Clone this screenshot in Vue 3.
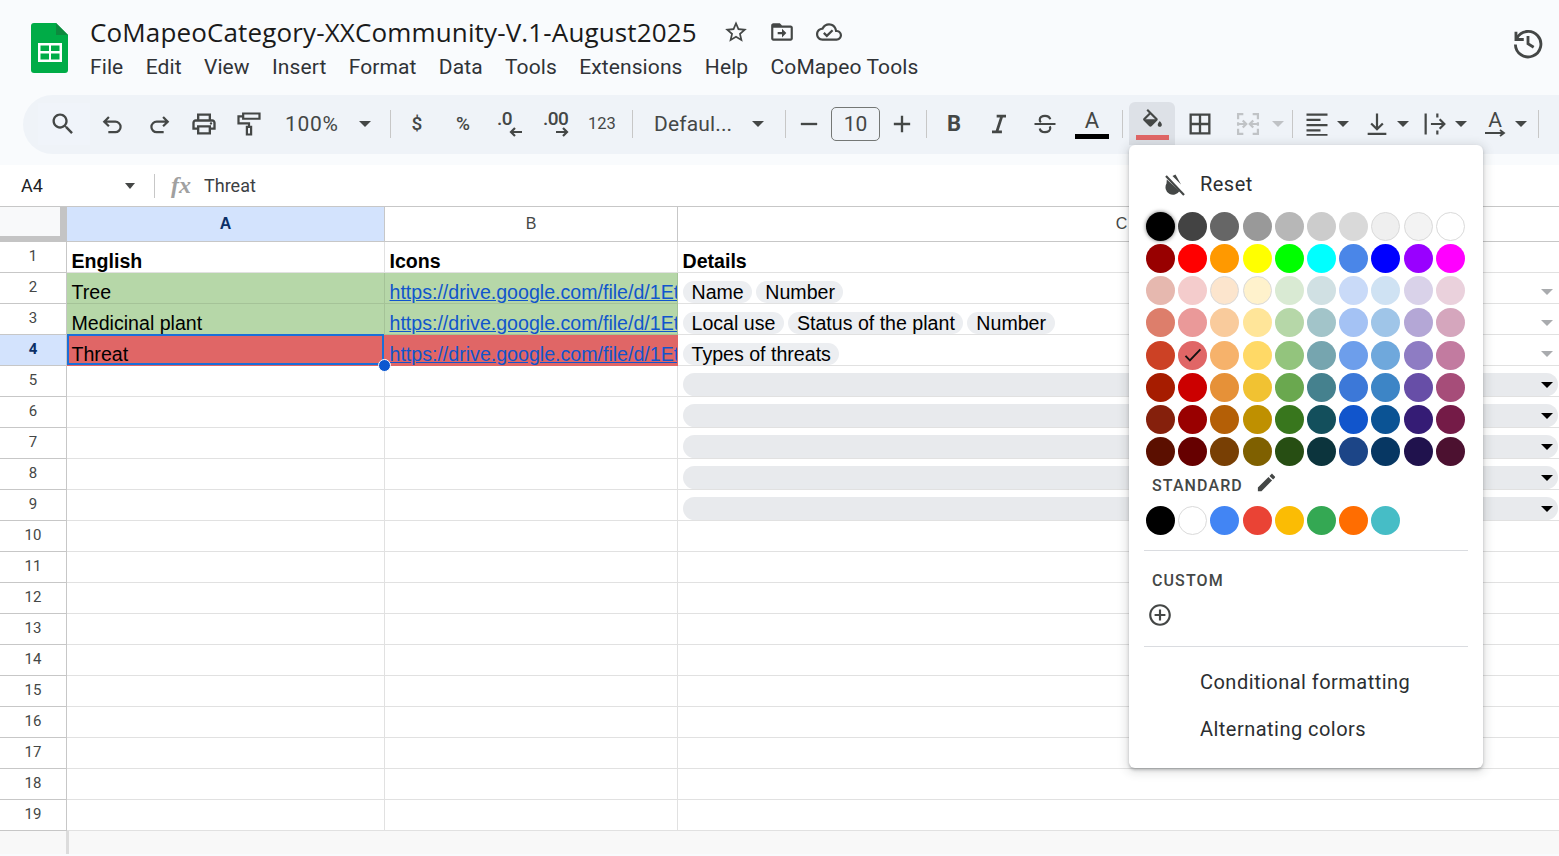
<template>
  <div class="app">
    <header class="head">
      <svg class="logo" viewBox="0 0 37 50">
        <path d="M3 0h22l12 12v35a3 3 0 0 1-3 3H3a3 3 0 0 1-3-3V3a3 3 0 0 1 3-3z" fill="#00ac47" />
        <path d="M25 0l12 12H25z" fill="#0d8a3e" />
        <path d="M7 20h24v19H7z M9.500 22.500v5.500h8.500v-5.500z M20 22.500v5.500h8.500v-5.500z M9.500 30.500v6h8.500v-6z M20 30.500v6h8.500v-6z" fill="#fff" fill-rule="evenodd" />
      </svg>
      <div class="head-main">
        <div class="title-row">
          <span class="title">CoMapeoCategory-XXCommunity-V.1-August2025</span>
          <svg class="title-ico star" viewBox="0 0 24 24"><path :d="icons.star.d" /></svg>
          <svg class="title-ico folder" viewBox="0 0 24 24"><path :d="icons.folder.d" /></svg>
          <svg class="title-ico cloud" viewBox="0 0 24 24"><path :d="icons.cloud.d" /></svg>
        </div>
        <nav class="menu">
          <span v-for="m in menu" :key="m">{{ m }}</span>
        </nav>
      </div>
      <svg class="history line-ico" viewBox="0 0 24 24">
        <path d="M4.200 8.500A9 9 0 1 1 3.100 13" />
        <path d="M3.500 4v5.500H9" />
        <path d="M12 7v5.500l4 2.500" />
      </svg>
    </header>

    <div class="toolbar">
      <template v-for="(t, i) in tools" :key="i">
        <div v-if="t.sep" class="sep" :style="{ width: t.w + 'px' }"><i></i></div>
        <div v-else class="tool" :class="t.cls" :style="{ width: t.w + 'px' }">
          <svg v-if="t.icon" class="ico" :class="{ stroked: icons[t.icon].stroked }" viewBox="0 0 24 24">
            <path :d="icons[t.icon].d" />
            <circle v-if="t.icon === 'print'" cx="18" cy="11.500" r="1" />
          </svg>
          <span v-if="t.text" class="tool-text">{{ t.text }}</span>
          <span v-if="t.dec" class="dec">
            <b>{{ t.dec }}</b>
            <svg viewBox="0 0 14 10" :class="t.flip ? 'flip' : ''"><path d="M13 5H2M6 1 2 5l4 4" /></svg>
          </span>
          <span v-if="t.bar" class="bar-a">A<i></i></span>
          <span v-if="t.fill" class="bar-fill">
            <svg class="ico" viewBox="0 0 24 24"><path :d="icons.fill.d" /><path d="M5.210 10h9.580L10 14.800z" /></svg>
            <i></i>
          </span>
          <span v-if="t.rotate" class="rot">A<svg viewBox="0 0 24 8"><path d="M2 4h19M17 1l4 3-4 3" /></svg></span>
          <span v-if="t.box" class="size-box">10</span>
          <i v-if="t.caret" class="caret" :class="{ off: t.off }"></i>
        </div>
      </template>
    </div>

    <div class="formula">
      <span class="cell-name">A4</span>
      <i class="caret small"></i>
      <i class="fsep"></i>
      <span class="fx">fx</span>
      <span class="fval">Threat</span>
    </div>

    <section class="sheet">
      <div class="row head-row">
        <div class="corner"></div>
        <div class="col-h sel">A</div>
        <div class="col-h">B</div>
        <div class="col-h">C</div>
      </div>

      <div v-for="n in 19" :key="n" class="row">
        <div class="row-h" :class="{ sel: n === 4 }">{{ n }}</div>
        <div class="cell a" :class="[rowCls(n), { active: n === 4, bold: n === 1 }]">{{ rows[n - 1]?.a }}</div>
        <div class="cell b" :class="[rowCls(n), { bold: n === 1 }]">
          <a v-if="rows[n - 1]?.link">https://drive.google.com/file/d/1EtmTy8Hk3dGq</a>
          <template v-else>{{ rows[n - 1]?.b }}</template>
        </div>
        <div class="cell c" :class="{ bold: n === 1 }">
          <template v-if="n === 1">Details</template>
          <template v-else-if="rows[n - 1]?.chips">
            <span v-for="c in rows[n - 1].chips" :key="c" class="chip">{{ c }}</span>
            <i class="caret grey"></i>
          </template>
          <div v-else-if="n >= 5 && n <= 9" class="empty-chip"><i class="caret dark"></i></div>
        </div>
      </div>
    </section>

    <footer class="foot"><i></i></footer>

    <div class="popup">
      <div class="reset">
        <svg class="reset-ico" viewBox="0 0 24 24">
          <path d="M3.500 11.500A7.500 7.500 0 0 0 16.500 19L3.800 7.500z" />
          <path d="M9.500 4l3-1.500L18 12.500z" />
          <path class="slash" d="M3 4l18 19" />
        </svg>
        <span>Reset</span>
      </div>
      <div class="swatches">
        <span
          v-for="c in palette"
          :key="c.id"
          class="swatch"
          :class="{ light: lightOnes.includes(c.hex), first: c.id === 0 }"
          :style="{ background: c.hex }"
        >
          <svg v-if="c.hex === '#e06666'" viewBox="0 0 24 24"><path d="M4 12.500l5 5L21 5" /></svg>
        </span>
      </div>
      <div class="label std">
        <span>STANDARD</span>
        <svg viewBox="0 0 24 24"><path :d="icons.pencil.d" /></svg>
      </div>
      <div class="swatches">
        <span
          v-for="c in standard"
          :key="c"
          class="swatch"
          :class="{ light: c === '#ffffff' }"
          :style="{ background: c }"
        ></span>
      </div>
      <hr class="rule one" />
      <div class="label custom">CUSTOM</div>
      <svg class="plus" viewBox="0 0 24 24"><path :d="icons.plus.d" /></svg>
      <hr class="rule two" />
      <div class="pop-item first">Conditional formatting</div>
      <div class="pop-item">Alternating colors</div>
    </div>
  </div>
</template>

<script setup>
const menu = ["File", "Edit", "View", "Insert", "Format", "Data", "Tools", "Extensions", "Help", "CoMapeo Tools"];

const icons = {
  star: { d: "M22 9.240l-7.190-.620L12 2 9.190 8.630 2 9.240l5.460 4.730L5.820 21 12 17.270 18.180 21l-1.630-7.030L22 9.240zM12 15.400l-3.760 2.270 1-4.280-3.320-2.880 4.380-.380L12 6.100l1.710 4.040 4.380.380-3.320 2.880 1 4.280L12 15.400z" },
  folder: { d: "M20 6h-8l-2-2H4c-1.100 0-2 .900-2 2v12c0 1.100.900 2 2 2h16c1.100 0 2-.900 2-2V8c0-1.100-.900-2-2-2zm0 12H4V8h16v10zm-8-4H8v-2h4V9l4 4-4 4v-3z" },
  cloud: { d: "M19.350 10.040C18.670 6.590 15.640 4 12 4 9.110 4 6.600 5.640 5.350 8.040 2.340 8.360 0 10.910 0 14c0 3.310 2.690 6 6 6h13c2.760 0 5-2.240 5-5 0-2.640-2.050-4.780-4.650-4.960zM19 18H6c-2.210 0-4-1.790-4-4 0-2.050 1.530-3.760 3.560-3.970l1.070-.110.500-.950C8.080 7.140 9.940 6 12 6c2.620 0 4.880 1.860 5.390 4.430l.300 1.500 1.530.110c1.560.100 2.780 1.410 2.780 2.960 0 1.650-1.350 3-3 3zm-9-3.820l-2.090-2.090L6.500 13.500 10 17l6.010-6.010-1.410-1.410z" },
  search: { d: "M15.500 14h-.790l-.280-.270C15.410 12.590 16 11.110 16 9.500 16 5.910 13.090 3 9.500 3S3 5.910 3 9.500 5.910 16 9.500 16c1.610 0 3.090-.590 4.230-1.570l.270.280v.790l5 4.990L20.490 19l-4.990-5zm-6 0C7.010 14 5 11.990 5 9.500S7.010 5 9.500 5 14 7.010 14 9.500 11.990 14 9.500 14z" },
  undo: { stroked: true, d: "M8.500 6 4.500 10l4 4M4.500 10H14a4.500 4.500 0 0 1 0 9H8" },
  redo: { stroked: true, d: "M15.500 6l4 4-4 4M19.500 10H10a4.500 4.500 0 0 0 0 9h6" },
  print: { d: "M19 8h-1V3H6v5H5c-1.660 0-3 1.340-3 3v6h4v4h12v-4h4v-6c0-1.660-1.340-3-3-3zM8 5h8v3H8V5zm8 12v2H8v-4h8v2zm2-2v-2H6v2H4v-4c0-.550.450-1 1-1h14c.550 0 1 .450 1 1v4h-2z" },
  paint: { stroked: true, d: "M7 3h14v4.500H7zM7 5.500H3v6h9v3M10.200 14.500h3.600V21h-3.600z" },
  minus: { d: "M5 11h14v2H5z" },
  add: { d: "M19 13h-6v6h-2v-6H5v-2h6V5h2v6h6v2z" },
  italic: { d: "M10 4v2.500h2.800l-3.600 11H6V20h8.500v-2.500h-2.800l3.600-11H18V4z" },
  strike: { stroked: true, d: "M16.500 8c-.500-2-2.300-3-4.500-3-2.700 0-4.500 1.400-4.500 3.300 0 .900.400 1.700 1 2.200M3 12h18M7.500 15.800c.400 2.200 2.300 3.200 4.500 3.200 2.700 0 4.500-1.400 4.500-3.300 0-.700-.200-1.200-.500-1.700" },
  fill: { d: "M16.560 8.940L7.620 0 6.210 1.410l2.380 2.380-5.150 5.150c-.590.590-.590 1.540 0 2.120l5.500 5.500c.290.290.680.440 1.060.440s.770-.150 1.060-.440l5.500-5.500c.590-.580.590-1.530 0-2.120zM5.210 10L10 5.210 14.790 10H5.210zM19 11.500s-2 2.170-2 3.500c0 1.100.900 2 2 2s2-.900 2-2c0-1.330-2-3.500-2-3.500z" },
  borders: { d: "M3 3v18h18V3H3zm8 16H5v-6h6v6zm0-8H5V5h6v6zm8 8h-6v-6h6v6zm0-8h-6V5h6v6z" },
  merge: { stroked: true, d: "M8 3.500H3.500V8M3.500 16v4.500H8M16 3.500h4.500V8M20.500 16v4.500H16M3.500 10.500v3M20.500 10.500v3M3.500 12H10M7.500 9l3 3-3 3M20.500 12H14M16.500 9l-3 3 3 3" },
  align: { d: "M3 3h18v2H3zM3 7.500h12v2H3zM3 12h18v2H3zM3 16.500h12v2H3zM3 20.500h18v1.500H3z" },
  valign: { stroked: true, d: "M12 3v13M7 11.500l5 5 5-5M4 20.500h16" },
  wrap: { stroked: true, d: "M4 3v18M8.500 12H20M16 8l4 4-4 4M14 3v3.500M14 17.500V21" },
  pencil: { d: "M3 17.250V21h3.750L17.810 9.940l-3.750-3.750L3 17.250zM20.710 7.040c.390-.390.390-1.020 0-1.410l-2.340-2.340c-.390-.390-1.020-.390-1.410 0l-1.830 1.830 3.750 3.750 1.830-1.830z" },
  plus: { d: "M13 7h-2v4H7v2h4v4h2v-4h4v-2h-4V7zm-1-5C6.480 2 2 6.480 2 12s4.480 10 10 10 10-4.480 10-10S17.520 2 12 2zm0 18c-4.410 0-8-3.590-8-8s3.590-8 8-8 8 3.590 8 8-3.590 8-8 8z" },
};

// widths are the distance to the next button, the toolbar is one flex row
const tools = [
  { w: 52, icon: "search", cls: "search" },
  { w: 46, icon: "undo" },
  { w: 45, icon: "redo" },
  { w: 46, icon: "print" },
  { w: 43, icon: "paint" },
  { w: 108, text: "100%", caret: true, cls: "zoom" },
  { w: 24, sep: true },
  { w: 30, text: "$", cls: "sym" },
  { w: 62, text: "%", cls: "sym" },
  { w: 30, dec: ".0" },
  { w: 62, dec: ".00", flip: true },
  { w: 32, text: "123", cls: "num" },
  { w: 28, sep: true },
  { w: 126, text: "Defaul...", caret: true, cls: "font" },
  { w: 26, sep: true },
  { w: 22, icon: "minus" },
  { w: 68, box: true, cls: "box" },
  { w: 28, icon: "add" },
  { w: 20, sep: true },
  { w: 36, text: "B", cls: "bold-b" },
  { w: 54, icon: "italic" },
  { w: 38, icon: "strike" },
  { w: 56, bar: true },
  { w: 4, sep: true },
  { w: 46, fill: true, cls: "fill" },
  { w: 50, icon: "borders" },
  { w: 46, icon: "merge", cls: "off" },
  { w: 14, caret: true, off: true },
  { w: 14, sep: true },
  { w: 60, icon: "align", caret: true, cls: "split" },
  { w: 58, icon: "valign", caret: true, cls: "split" },
  { w: 60, icon: "wrap", caret: true, cls: "split" },
  { w: 60, rotate: true, caret: true, cls: "split turn" },
  { w: 2, sep: true },
];

const rows = [
  { a: "English", b: "Icons" },
  { a: "Tree", link: true, chips: ["Name", "Number"] },
  { a: "Medicinal plant", link: true, chips: ["Local use", "Status of the plant", "Number"] },
  { a: "Threat", link: true, chips: ["Types of threats"] },
];

const rowCls = (n) => (n === 2 || n === 3 ? "green" : n === 4 ? "red" : "");

const paletteHex = [
  "#000000", "#434343", "#666666", "#999999", "#b7b7b7", "#cccccc", "#d9d9d9", "#efefef", "#f3f3f3", "#ffffff",
  "#980000", "#ff0000", "#ff9900", "#ffff00", "#00ff00", "#00ffff", "#4a86e8", "#0000ff", "#9900ff", "#ff00ff",
  "#e6b8af", "#f4cccc", "#fce5cd", "#fff2cc", "#d9ead3", "#d0e0e3", "#c9daf8", "#cfe2f3", "#d9d2e9", "#ead1dc",
  "#dd7e6b", "#ea9999", "#f9cb9c", "#ffe599", "#b6d7a8", "#a2c4c9", "#a4c2f4", "#9fc5e8", "#b4a7d6", "#d5a6bd",
  "#cc4125", "#e06666", "#f6b26b", "#ffd966", "#93c47d", "#76a5af", "#6d9eeb", "#6fa8dc", "#8e7cc3", "#c27ba0",
  "#a61c00", "#cc0000", "#e69138", "#f1c232", "#6aa84f", "#45818e", "#3c78d8", "#3d85c6", "#674ea7", "#a64d79",
  "#85200c", "#990000", "#b45f06", "#bf9000", "#38761d", "#134f5c", "#1155cc", "#0b5394", "#351c75", "#741b47",
  "#5b0f00", "#660000", "#783f04", "#7f6000", "#274e13", "#0c343d", "#1c4587", "#073763", "#20124d", "#4c1130",
];
const palette = paletteHex.map((hex, id) => ({ hex, id }));
const lightOnes = ["#efefef", "#f3f3f3", "#ffffff", "#fce5cd", "#fff2cc"];
const standard = ["#000000", "#ffffff", "#4285f4", "#ea4335", "#fbbc04", "#34a853", "#ff6d01", "#46bdc6"];
</script>

<style>
html,
body {
  margin: 0;
  background: #fff;
}
</style>

<style scoped>
.app {
  position: relative;
  width: 1559px;
  height: 856px;
  overflow: hidden;
  font-family: Roboto, "Liberation Sans", sans-serif;
  color: #202124;
  background: #f9fbfd;
}

.head {
  height: 95px;
  box-sizing: border-box;
  padding: 23px 0 0 31px;
  display: flex;
  align-items: flex-start;
}
.logo {
  width: 37px;
  height: 50px;
  flex: none;
}
.head-main {
  margin-left: 21px;
  margin-top: -9px;
}
.title-row {
  display: flex;
  align-items: center;
  height: 36px;
}
.title {
  font-family: "Open Sans", sans-serif;
  font-size: 26px;
  letter-spacing: 0.14px;
  width: 606px;
  white-space: nowrap;
  color: #1a1a1a;
  margin-left: 1px;
}
.title-ico {
  width: 26px;
  height: 26px;
  fill: #444746;
  flex: none;
}
.star {
  margin-left: 27px;
}
.folder {
  margin-left: 20px;
}
.cloud {
  margin-left: 21px;
}
.menu {
  display: flex;
  gap: 22.300px;
  margin: 4px 0 0 1px;
  font-size: 21px;
  letter-spacing: 0.1px;
  line-height: 26px;
  color: #303337;
}
.history {
  position: absolute;
  left: 1511px;
  top: 26px;
  width: 34px;
  height: 34px;
}
.line-ico {
  fill: none;
  stroke: #444746;
  stroke-width: 2;
}

.toolbar {
  height: 59px;
  box-sizing: border-box;
  margin-left: 23px;
  padding: 0 0 2px 15px;
  background: #eff3f8;
  border-radius: 30px 0 0 30px;
  display: flex;
  align-items: center;
}
.tool {
  display: flex;
  align-items: center;
  justify-content: center;
  height: 42px;
  flex: none;
  color: #444746;
}
.ico {
  width: 28px;
  height: 28px;
  fill: #444746;
  flex: none;
}
.ico.stroked {
  fill: none;
  stroke: #444746;
  stroke-width: 1.900;
}
.off .ico.stroked {
  stroke: #c0c3c6;
}
.search {
  background: #f0f4fa;
  padding-right: 3px;
  box-sizing: border-box;
}
.sep {
  display: flex;
  justify-content: center;
  flex: none;
}
.sep i {
  width: 1px;
  height: 28px;
  background: #c7c7c7;
}
.caret {
  display: block;
  width: 0;
  height: 0;
  border-left: 6px solid transparent;
  border-right: 6px solid transparent;
  border-top: 6px solid #444746;
  flex: none;
}
.caret.off {
  border-top-color: #bfc2c5;
}
.tool-text {
  font-size: 21px;
  letter-spacing: 0.15px;
}
.zoom {
  justify-content: flex-start;
  padding-left: 15px;
  box-sizing: border-box;
}
.zoom .tool-text {
  letter-spacing: 0.7px;
}
.zoom .caret {
  margin-left: 20px;
}
.font {
  justify-content: flex-start;
  padding-left: 8px;
  box-sizing: border-box;
}
.font .tool-text {
  width: 98px;
}
.sym .tool-text {
  font-size: 19px;
  font-weight: 500;
}
.num .tool-text {
  font-size: 16.500px;
  letter-spacing: 0;
}
.bold-b .tool-text {
  font-size: 22px;
  font-weight: 700;
}
.dec {
  display: flex;
  flex-direction: column;
  align-items: flex-start;
  width: 27px;
  padding-left: 3px;
  line-height: 17px;
  margin-top: -1px;
}
.dec b {
  font-size: 19px;
  font-weight: 500;
  letter-spacing: -0.5px;
}
.dec svg {
  width: 14px;
  height: 10px;
  fill: none;
  stroke: #444746;
  stroke-width: 2.200;
  margin-left: 12px;
}
.dec svg.flip {
  transform: scaleX(-1);
}
.box {
  justify-content: flex-start;
  padding-left: 11px;
  box-sizing: border-box;
}
.size-box {
  width: 49px;
  height: 34px;
  box-sizing: border-box;
  border: 1px solid #747775;
  border-radius: 5px;
  text-align: center;
  line-height: 32px;
  font-size: 21px;
}
.bar-a {
  display: flex;
  flex-direction: column;
  align-items: center;
  font-size: 22px;
  line-height: 20px;
  margin-top: 3px;
}
.bar-a i {
  width: 34px;
  height: 5px;
  background: #000;
  margin-top: 3px;
}
.fill {
  margin-left: 5px;
  height: 43px;
  background: #dde1e7;
  border-radius: 6px 6px 0 0;
  align-self: flex-end;
  margin-bottom: 7px;
}
.bar-fill {
  display: flex;
  flex-direction: column;
  align-items: center;
  margin-top: 2px;
}
.bar-fill .ico {
  width: 25px;
  height: 25px;
  margin-left: 1px;
}
.bar-fill i {
  width: 33px;
  height: 5px;
  background: #e06666;
  margin-top: 1px;
}
.split {
  justify-content: flex-start;
  padding-left: 4px;
  box-sizing: border-box;
  gap: 6px;
}
.split.turn {
  padding-left: 6px;
  gap: 8px;
}
.rot {
  width: 24px;
  display: flex;
  flex-direction: column;
  align-items: center;
  font-size: 21px;
  line-height: 18px;
}
.rot svg {
  width: 24px;
  height: 8px;
  fill: none;
  stroke: #444746;
  stroke-width: 1.800;
}

.formula {
  margin-top: 11px;
  height: 41px;
  background: #fff;
  display: flex;
  align-items: center;
}
.cell-name {
  margin-left: 21px;
  width: 104px;
  font-size: 18px;
}
.caret.small {
  border-left-width: 5.500px;
  border-right-width: 5.500px;
  border-top-width: 6px;
}
.fsep {
  width: 1px;
  height: 24px;
  background: #c7c7c7;
  margin-left: 19px;
}
.fx {
  margin-left: 16px;
  width: 33px;
  font-family: "Liberation Serif", serif;
  font-style: italic;
  font-weight: 700;
  font-size: 24px;
  color: #a0a0a0;
}
.fval {
  font-size: 18px;
  color: #3c4043;
}

.sheet {
  border-top: 1px solid #c7c7c7;
  background: #fff;
}
.row {
  display: grid;
  grid-template-columns: 67px 318px 293px 888px;
  height: 31px;
}
.head-row {
  height: 35px;
}
.corner {
  box-sizing: border-box;
  background: #f8f9fa;
  border-right: 7px solid #c4c4c4;
  border-bottom: 6px solid #c4c4c4;
}
.col-h {
  box-sizing: border-box;
  border-right: 1px solid #c7c7c7;
  border-bottom: 1px solid #c7c7c7;
  display: flex;
  align-items: center;
  justify-content: center;
  font-size: 16px;
  color: #444746;
  font-family: "Liberation Sans", sans-serif;
}
.col-h.sel {
  background: #d3e3fd;
  color: #0b2f66;
  font-weight: 700;
}
.row-h {
  box-sizing: border-box;
  border-right: 1px solid #c7c7c7;
  border-bottom: 1px solid #c7c7c7;
  display: flex;
  align-items: center;
  justify-content: center;
  padding-bottom: 2px;
  font-size: 15px;
  color: #444746;
}
.row-h.sel {
  background: #d3e3fd;
  color: #0b2f66;
  font-weight: 700;
}
.cell {
  position: relative;
  box-sizing: border-box;
  border-right: 1px solid #e1e1e1;
  border-bottom: 1px solid #e1e1e1;
  font-family: "Liberation Sans", sans-serif;
  font-size: 19.600px;
  line-height: 22px;
  color: #000;
  padding: 0 5px 0 4.500px;
  display: flex;
  align-items: flex-end;
  white-space: nowrap;
  overflow: hidden;
}
.cell.a {
  overflow: visible;
}
.bold {
  font-weight: 700;
}
.green {
  background: #b6d7a8;
  border-color: #a5c398;
}
.red {
  background: #e06666;
  border-color: #e06666;
}
.cell a {
  color: #1155cc;
  text-decoration: underline;
}
.active::after {
  content: "";
  position: absolute;
  left: 0;
  right: 0;
  top: -1px;
  bottom: 0;
  border: 2px solid #1a6fd8;
  box-sizing: border-box;
}
.active::before {
  content: "";
  position: absolute;
  right: -7px;
  bottom: -7px;
  width: 11px;
  height: 11px;
  background: #0b57d0;
  border: 1px solid #fff;
  border-radius: 50%;
  z-index: 2;
}
.c {
  gap: 4px;
  padding-right: 13px;
  border-right: 0;
}
.chip {
  background: #eceef1;
  border-radius: 12px;
  padding: 0 8.500px 0 9px;
  height: 22px;
  line-height: 23px;
}
.caret.grey {
  margin: 0 0 8px auto;
  border-top-color: #a9abae;
}
.empty-chip {
  flex: 1;
  height: 23px;
  margin-right: -5px;
  background: #e8eaed;
  border-radius: 12px;
  display: flex;
  align-items: center;
  justify-content: flex-end;
  padding-right: 5px;
}
.caret.dark {
  border-top-color: #000;
}
.foot {
  height: 23px;
  background: #f8f8f8;
}
.foot i {
  display: block;
  margin-left: 66px;
  width: 3px;
  height: 23px;
  background: #dcdcdc;
}

.popup {
  position: absolute;
  left: 1129px;
  top: 145px;
  width: 354px;
  height: 623px;
  box-sizing: border-box;
  padding: 0 15px 0 15px;
  background: #fff;
  border-radius: 6px;
  box-shadow: 0 2px 3px rgba(60, 64, 67, 0.3), 0 2px 10px 3px rgba(60, 64, 67, 0.14);
  font-size: 20px;
  letter-spacing: 0.47px;
}
.reset {
  height: 67px;
  box-sizing: border-box;
  padding: 10px 0 0 19px;
  display: flex;
  align-items: center;
  gap: 13px;
  color: #2b2e31;
}
.reset-ico {
  width: 24px;
  height: 24px;
  fill: #444746;
}
.slash {
  fill: none;
  stroke: #444746;
  stroke-width: 2.200;
}
.swatches {
  display: grid;
  grid-template-columns: repeat(10, 29px);
  column-gap: 3.200px;
  row-gap: 3.150px;
  margin-left: 2px;
}
.swatch {
  width: 29px;
  height: 29px;
  border-radius: 50%;
  box-sizing: border-box;
  display: flex;
  align-items: center;
  justify-content: center;
}
.swatch.light {
  border: 1px solid #dadada;
}
.swatch.first {
  box-shadow: 0 0 4px rgba(0, 0, 0, 0.55);
}
.swatch svg {
  width: 21px;
  height: 21px;
  fill: none;
  stroke: #111;
  stroke-width: 2.200;
}
.label {
  font-size: 16px;
  font-weight: 500;
  letter-spacing: 1.100px;
  color: #444746;
  padding-left: 8px;
}
.std {
  display: flex;
  align-items: center;
  gap: 12px;
  height: 40px;
  box-sizing: border-box;
  padding-bottom: 1px;
}
.std svg {
  width: 23px;
  height: 23px;
  fill: #444746;
  margin-top: -6px;
}
.rule {
  border: 0;
  height: 1px;
  background: #dadce0;
  margin: 0;
}
.rule.one {
  margin-top: 15px;
}
.custom {
  line-height: 20px;
  margin-top: 20px;
}
.plus {
  display: block;
  width: 26px;
  height: 26px;
  fill: #444746;
  margin: 11px 0 0 3px;
}
.rule.two {
  margin-top: 18px;
}
.pop-item {
  padding-left: 56px;
  height: 47px;
  line-height: 47px;
  color: #2b2e31;
}
.pop-item.first {
  margin-top: 12px;
}
</style>
